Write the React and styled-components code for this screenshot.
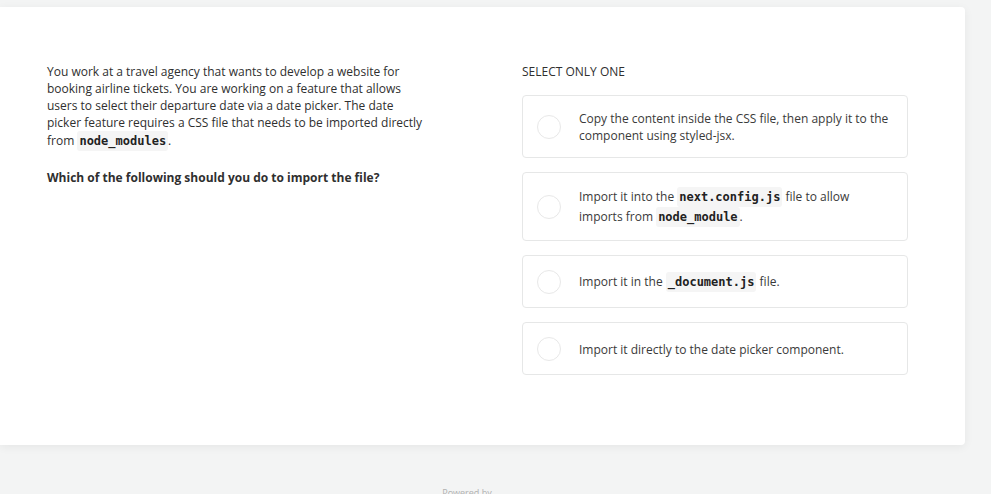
import React from "react";
import styled, { createGlobalStyle } from "styled-components";

const Global = createGlobalStyle`
  html, body { margin: 0; padding: 0; }
  body {
    background: #f3f4f4;
    font-family: "Open Sans", "Liberation Sans", sans-serif;
    color: #2f2f2f;
    overflow: hidden;
  }
`;

const Page = styled.div`
  padding-top: 7px;
  min-height: 494px;
  box-sizing: border-box;
`;

const Card = styled.div`
  width: 965px;
  height: 438px;
  box-sizing: border-box;
  background: #fff;
  border-radius: 0 4px 4px 0;
  box-shadow: 0 2px 10px rgba(0, 0, 0, 0.06);
  padding: 56px 58px 0 47px;
  display: grid;
  grid-template-columns: 378px 386px;
  column-gap: 97px;
  align-items: start;
`;

const Question = styled.div`
  font-size: 12px;
  line-height: 17px;
  color: #2f2f2f;
`;

const Para = styled.p`
  margin: 0 0 18px;
`;

const Strong = styled.p`
  margin: 0;
  font-weight: 700;
`;

const Code = styled.code`
  font-family: "DejaVu Sans Mono", "Liberation Mono", monospace;
  font-weight: 700;
  font-size: 12px;
  background: #f5f5f5;
  color: #222;
  border-radius: 3px;
  padding: 1.5px 2px;
  display: inline-block;
  line-height: 17px;
`;

const Answers = styled.div`
  display: flex;
  flex-direction: column;
  gap: 14px;
`;

const Label = styled.div`
  font-size: 12px;
  line-height: 17px;
  color: #2f2f2f;
  margin-bottom: 15px;
  text-transform: uppercase;
`;

const Option = styled.label`
  display: flex;
  align-items: center;
  gap: 18px;
  padding: 14px 14px 13px 14px;
  border: 1px solid #e6e7e7;
  border-radius: 4px;
  background: #fff;
  cursor: pointer;
`;

const Radio = styled.span`
  flex: none;
  width: 24px;
  height: 24px;
  box-sizing: border-box;
  border: 1px solid #e8e8e8;
  border-radius: 50%;
`;

const OptionText = styled.span`
  font-size: 12px;
  line-height: 17px;
  color: #3a3a3a;
`;

const Footer = styled.div`
  text-align: center;
  font-size: 9px;
  color: #b0b0b0;
  padding-top: 41px;
  margin-left: -57px;
`;

export default function App() {
  return (
    <Page>
      <Global />
      <Card>
        <Question>
          <Para>
            You work at a travel agency that wants to develop a website for booking airline tickets. You
            are working on a feature that allows users to select their departure date via a date picker.
            The date picker feature requires a CSS file that needs to be imported directly from{" "}
            <Code>node_modules</Code>.
          </Para>
          <Strong>Which of the following should you do to import the file?</Strong>
        </Question>
        <div>
          <Label>Select only one</Label>
          <Answers>
            <Option>
              <Radio />
              <OptionText>
                Copy the content inside the CSS file, then apply it to the component using styled-jsx.
              </OptionText>
            </Option>
            <Option>
              <Radio />
              <OptionText>
                Import it into the <Code>next.config.js</Code> file to allow imports from{" "}
                <Code>node_module</Code>.
              </OptionText>
            </Option>
            <Option>
              <Radio />
              <OptionText>
                Import it in the <Code>_document.js</Code> file.
              </OptionText>
            </Option>
            <Option>
              <Radio />
              <OptionText>Import it directly to the date picker component.</OptionText>
            </Option>
          </Answers>
        </div>
      </Card>
      <Footer>Powered by</Footer>
    </Page>
  );
}
